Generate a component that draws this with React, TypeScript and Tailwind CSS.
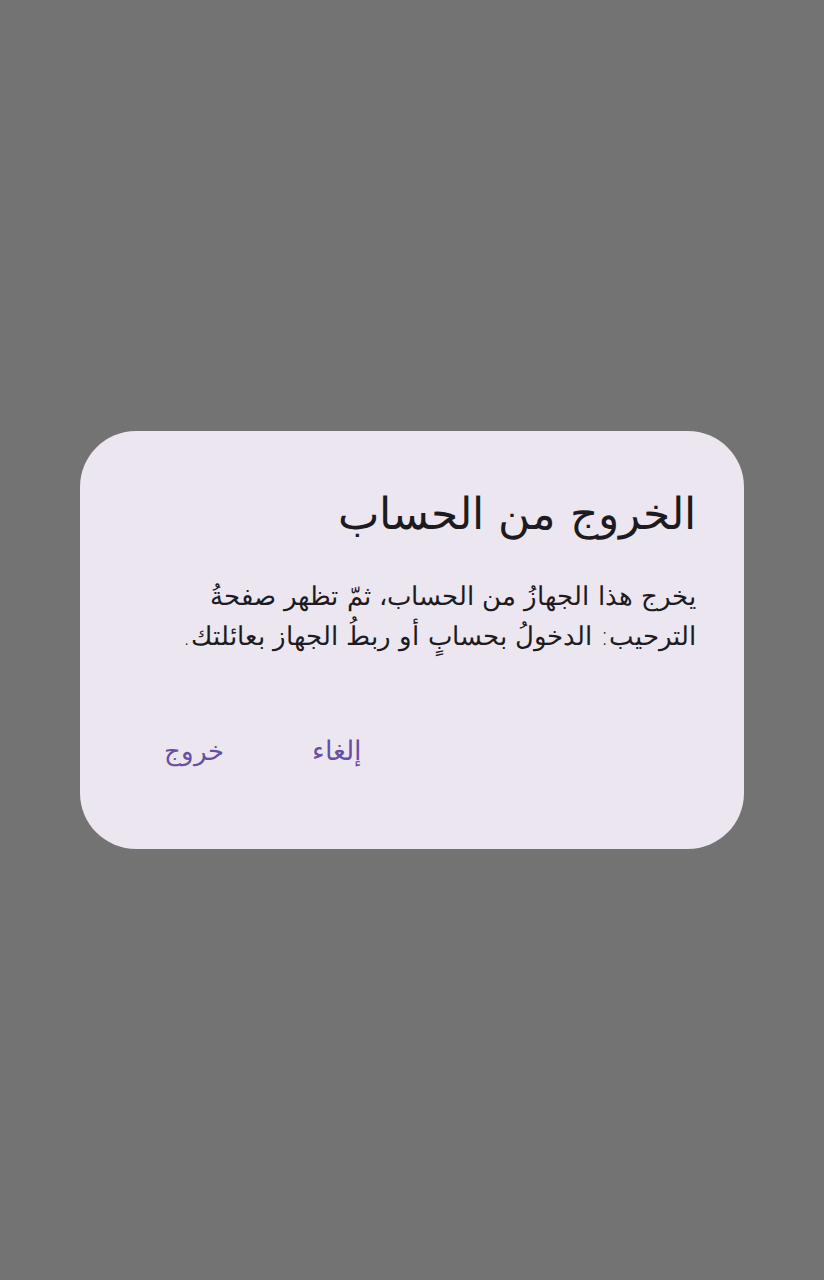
export default function App() {
  return (
    <div
      dir="rtl"
      className="flex min-h-[1280px] w-full items-center justify-center bg-[#737373] px-20"
      style={{ fontFamily: '"DejaVu Sans", "Noto Sans", sans-serif' }}
    >
      <div className="w-full rounded-[56px] bg-[#ece6f0] px-12 pb-[69px] pt-[51px]">
        <h1 className="text-[44px] font-light leading-[64px] text-[#1d1b20]">الخروج من الحساب</h1>
        <p className="mt-[30px] text-[26px] font-light leading-[40px] text-[#1d1b20]">
          يخرج هذا الجهازُ من الحساب، ثمّ تظهر صفحةُ الترحيب: الدخولُ بحسابٍ أو ربطُ الجهاز بعائلتك.
        </p>
        <div className="mt-[67px] flex justify-end gap-4">
          <button className="px-9 py-2 text-[27px] font-light text-[#6750a4]">إلغاء</button>
          <button className="px-9 py-2 text-[26px] font-light text-[#6750a4]">خروج</button>
        </div>
      </div>
    </div>
  );
}
